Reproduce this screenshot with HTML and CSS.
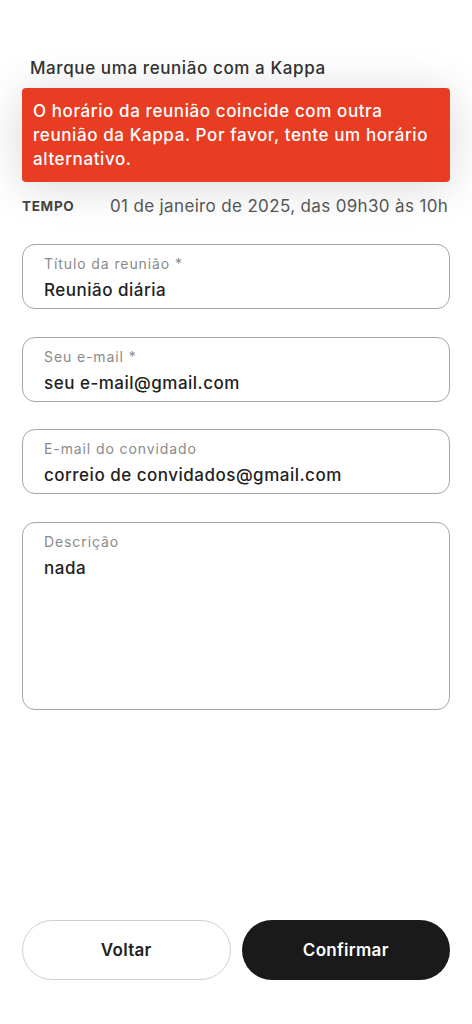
FILE: index.html
```html
<!DOCTYPE html>
<html>
<head>
    <title>Marque uma reunião</title>
    <link rel="stylesheet" href="styles.css">
</head>
<body>
    <div class="page">
        <h1 class="page-title">Marque uma reunião com a Kappa</h1>
        <div class="alert">
            O horário da reunião coincide com outra reunião da Kappa. Por favor, tente um horário alternativo.
        </div>
        <div class="time-row">
            <span class="time-label">TEMPO</span>
            <span class="time-value">01 de janeiro de 2025, das 09h30 às 10h</span>
        </div>

        <form class="meeting-form">
            <label class="field">
                <span class="field-label">Título da reunião *</span>
                <span class="field-value">Reunião diária</span>
            </label>
            <label class="field">
                <span class="field-label">Seu e-mail *</span>
                <span class="field-value">seu e-mail@gmail.com</span>
            </label>
            <label class="field">
                <span class="field-label">E-mail do convidado</span>
                <span class="field-value">correio de convidados@gmail.com</span>
            </label>
            <label class="field field-area">
                <span class="field-label">Descrição</span>
                <span class="field-value">nada</span>
            </label>
        </form>

        <div class="actions">
            <button class="btn btn-back" type="button">Voltar</button>
            <button class="btn btn-confirm" type="button">Confirmar</button>
        </div>
    </div>
</body>
</html>
```

FILE: styles.css
```css
body {
    margin: 0;
    background: #fff;
    font-family: Inter, "Noto Sans", sans-serif;
    color: #222;
}

.page {
    min-height: 100vh;
    box-sizing: border-box;
    display: flex;
    flex-direction: column;
    padding: 56px 22px 44px;
}

.page-title {
    margin: 0 0 8px 8px;
    font-size: 17px;
    line-height: 24px;
    font-weight: 500;
    letter-spacing: 0.6px;
    color: #333;
}

/* red warning banner */
.alert {
    background: #e83d23;
    color: #fff;
    border-radius: 4px;
    padding: 11px;
    font-size: 17px;
    line-height: 24px;
    font-weight: 500;
    letter-spacing: 0.6px;
    box-shadow: 0 4px 44px rgba(0, 0, 0, 0.16);
}

.time-row {
    display: flex;
    align-items: center;
    margin-top: 12px;
    line-height: 24px;
}

.time-label {
    width: 88px;
    font-size: 13.5px;
    font-weight: 700;
    letter-spacing: 0.7px;
    color: #444;
}

.time-value {
    font-size: 17px;
    letter-spacing: 0.35px;
    color: #555;
    white-space: nowrap;
}

.meeting-form {
    display: flex;
    flex-direction: column;
    gap: 27.5px;
    margin-top: 26px;
    width: 428px;
}

.field {
    display: flex;
    flex-direction: column;
    border: 1px solid #a6a6a6;
    border-radius: 13px;
    padding: 10px 21px 6px;
}

.field-label {
    font-size: 14px;
    line-height: 18px;
    letter-spacing: 0.9px;
    color: #8a8a8a;
    margin-bottom: 5px;
}

.field-value {
    font-size: 17px;
    line-height: 24px;
    font-weight: 500;
    letter-spacing: 0.5px;
    color: #222;
}

.field-area {
    height: 188px;
    box-sizing: border-box;
}

.actions {
    display: grid;
    grid-template-columns: 1fr 1fr;
    gap: 11px;
    margin-top: auto;
    width: 428px;
}

.btn {
    height: 60px;
    border-radius: 30px;
    font-family: inherit;
    font-size: 17px;
    font-weight: 600;
    letter-spacing: 0.3px;
    cursor: pointer;
}

.btn-back {
    background: #fff;
    border: 1px solid #d0d0d0;
    color: #222;
}

.btn-confirm {
    background: #1a1a1a;
    border: none;
    color: #fff;
}
```
